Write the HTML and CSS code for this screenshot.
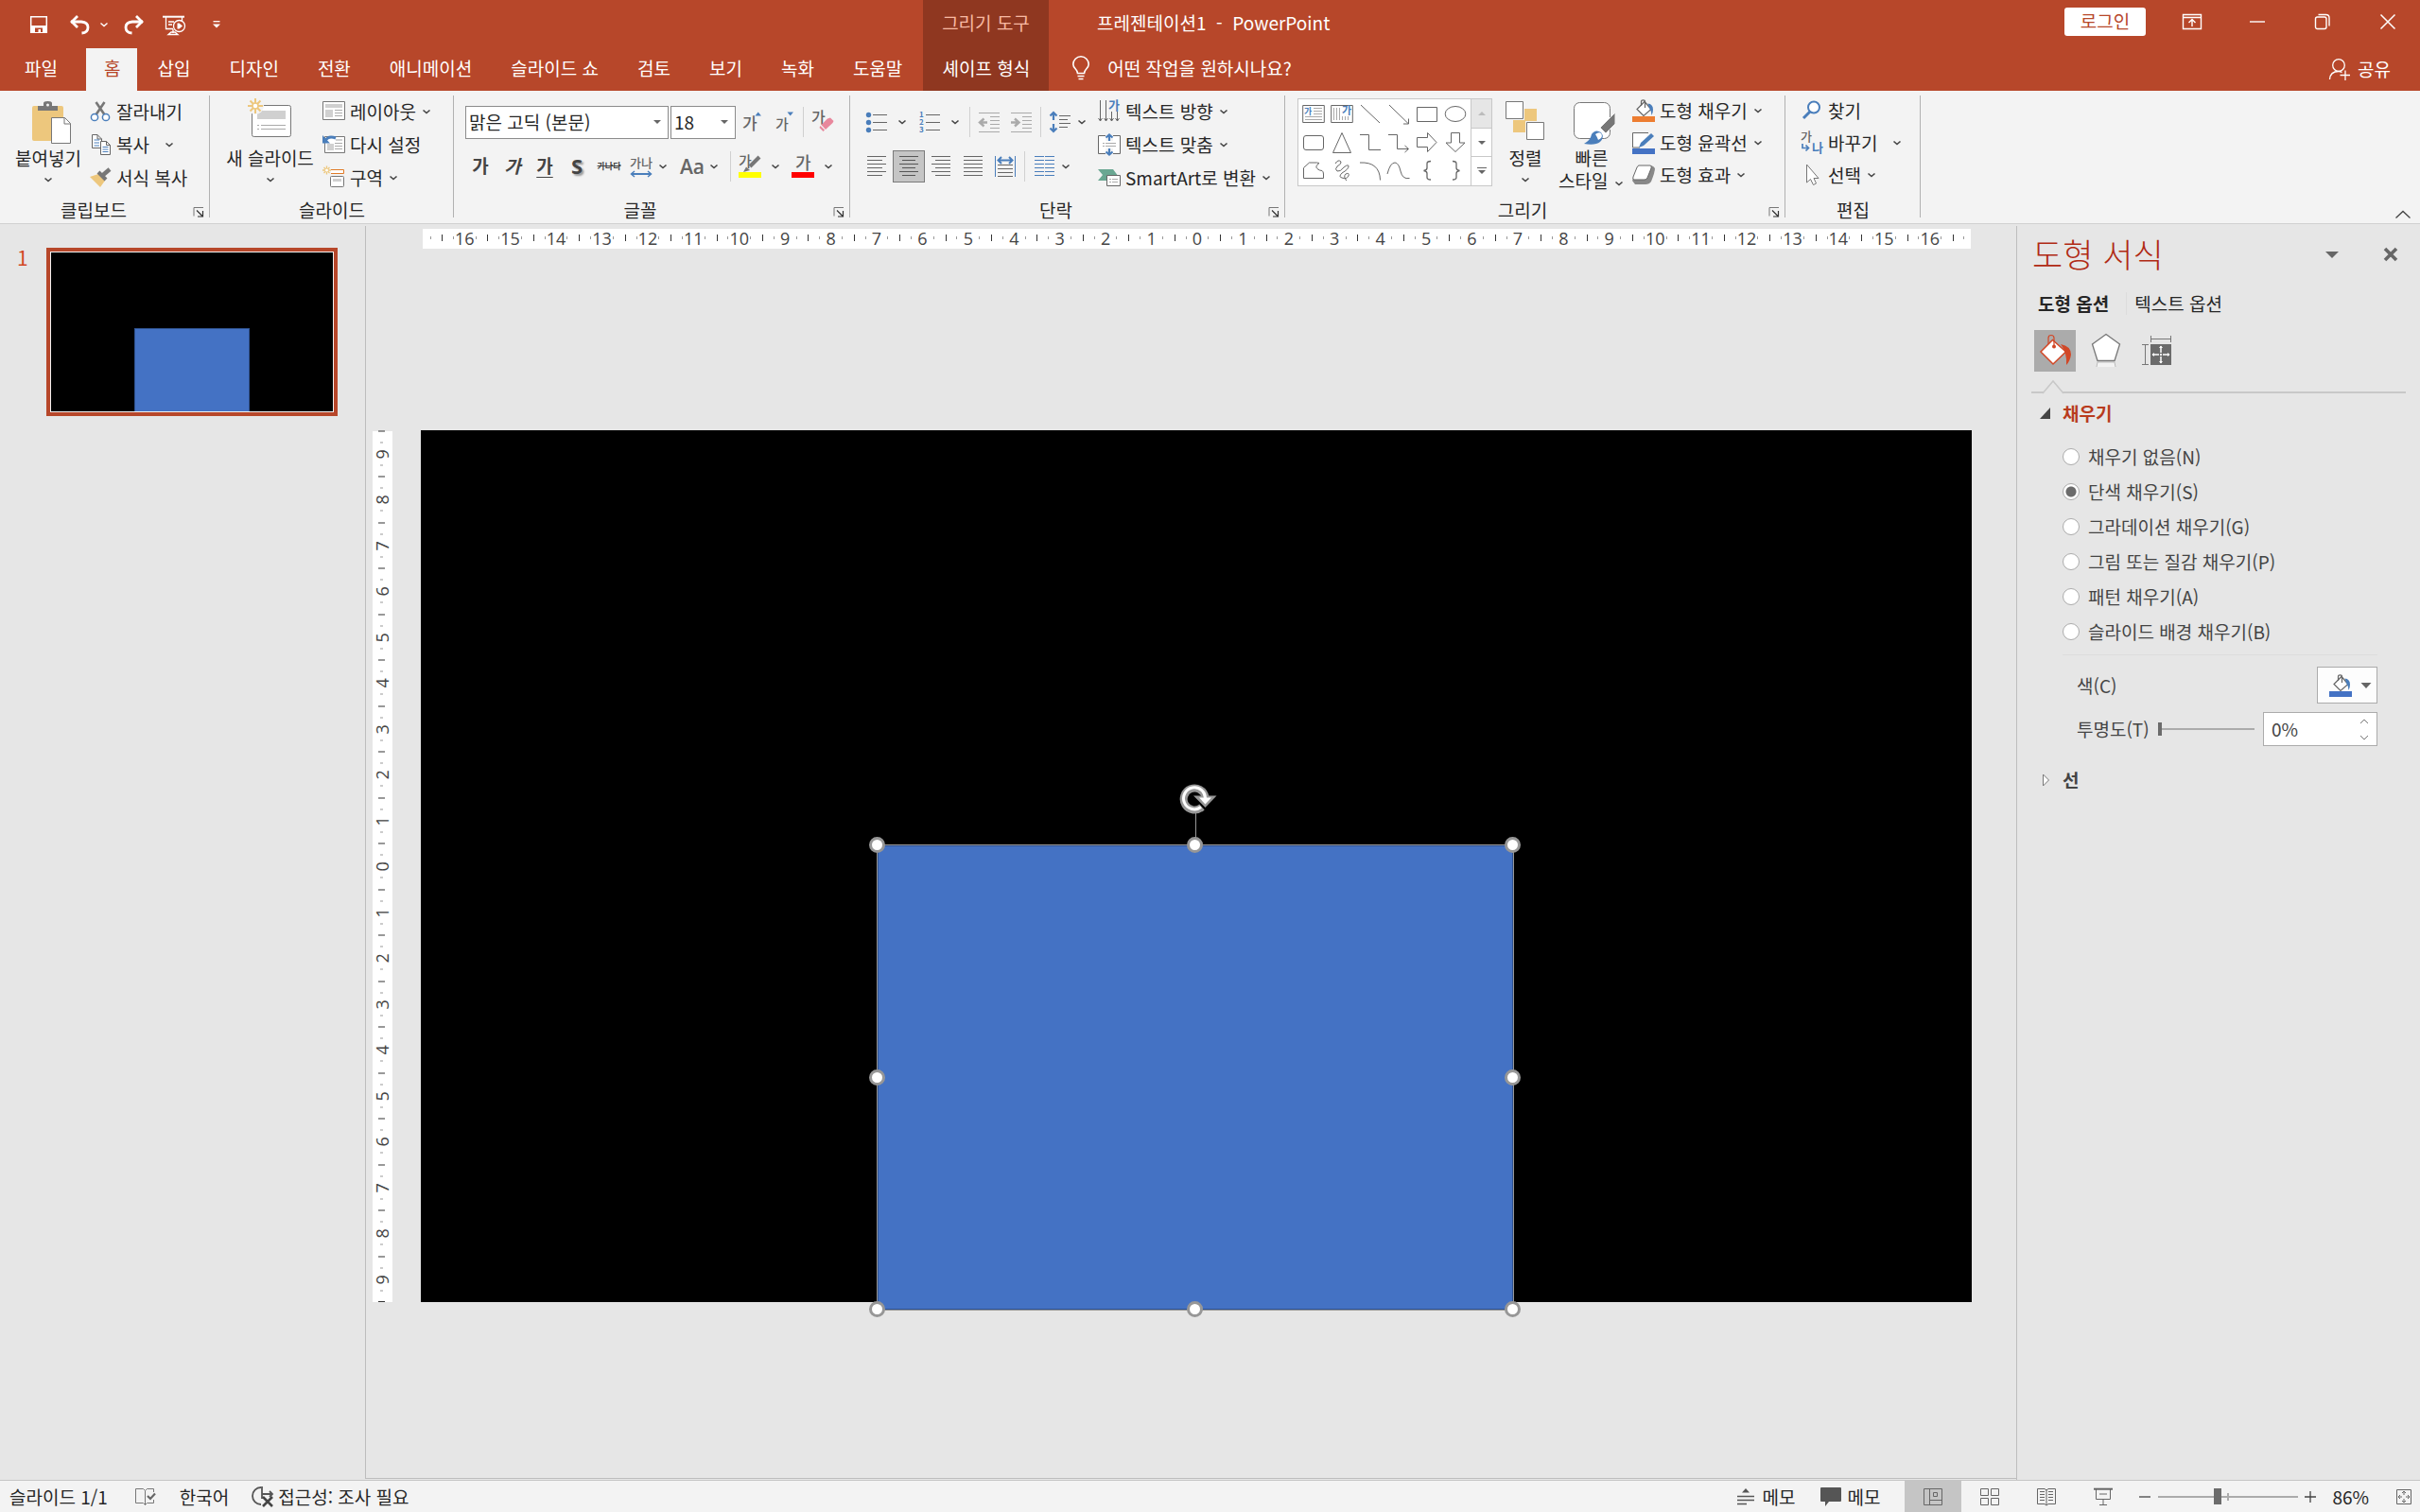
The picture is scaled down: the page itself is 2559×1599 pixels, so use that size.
FILE: index.html
```html
<!DOCTYPE html>
<html lang="ko">
<head>
  <meta charset="UTF-8">
  <meta name="viewport" content="width=device-width, initial-scale=1.0">
  <title>프레젠테이션1 - PowerPoint</title>
  <link rel="stylesheet" href="styles.css">
</head>
<body>
  <svg class="sprite" width="0" height="0">
    <symbol id="chev" viewBox="0 0 12 8"><path d="M2.5 2.5L6 5.5L9.5 2.5" fill="none" stroke="#444" stroke-width="1.6"/></symbol>
    <symbol id="launch" viewBox="0 0 12 12"><path d="M1 10.500V1.500H11" fill="none" stroke="#777"/><path d="M4 4.500L10 10.500M10.500 5V11H5" fill="none" stroke="#333" stroke-width="1.2"/></symbol>
    <symbol id="bucket" viewBox="0 0 24 24">
      <path d="M13 2.500L20 10.500L12 17.500L5 10.500Z" fill="#fff" stroke="#666" stroke-width="1.200"/>
      <path d="M9.500 7V2.500Q9.500 .8 11.500 .8T13.500 2.500V9" fill="none" stroke="#666" stroke-width="1.200"/>
      <path d="M16.500 4.500Q22 5 22 11Q22 14 20.500 17Q20 12 18 9Z" fill="#4a7ebb"/>
    </symbol>
  </svg>

  <header class="titlebar">
    <div class="quick">
      <button class="icon-btn" aria-label="저장"><svg width="24" height="24" viewBox="0 0 24 24"><path d="M3.700 3.700H20.300V20.300H3.700Z" fill="none" stroke="#fff" stroke-width="1.500"/><path d="M3 13H21V21H3Z" fill="#fff"/><path d="M8 15.500H16V20H14V17H11.500V20H8Z" fill="#b7472a"/></svg></button>
      <button class="icon-btn" aria-label="실행 취소"><svg width="24" height="24" viewBox="0 0 24 24"><path d="M3 9H14Q21 9.500 21 15Q21 20.500 14.500 21" fill="none" stroke="#fff" stroke-width="2.800"/><path d="M10 3L4 9L10 15" fill="none" stroke="#fff" stroke-width="2.800"/></svg></button>
      <button class="caret" aria-label="실행 취소 목록"><svg width="12" height="8" viewBox="0 0 12 8"><path d="M2.500 2.500L6 5.500L9.500 2.500" fill="none" stroke="#fff" stroke-width="1.400"/></svg></button>
      <button class="icon-btn redo" aria-label="다시 실행"><svg width="24" height="24" viewBox="0 0 24 24"><path d="M21 9H10Q3 9.500 3 15Q3 20.500 9.500 21" fill="none" stroke="#fff" stroke-width="2.800"/><path d="M14 3L20 9L14 15" fill="none" stroke="#fff" stroke-width="2.800"/></svg></button>
      <button class="icon-btn show" aria-label="처음부터 시작"><svg width="26" height="24" viewBox="0 0 26 24"><path d="M1 3.700H24" stroke="#fff" stroke-width="2"/><path d="M4.500 4V16.500H12M21.500 4V8M12 17V21M7 22.500H17L14 20H10ZM7 9H13M7 12H11" fill="none" stroke="#fff" stroke-width="1.300"/><circle cx="18.500" cy="13.500" r="6" fill="#b7472a" stroke="#fff" stroke-width="1.300"/><path d="M16.500 10.500H18.500L22 13.500L18.500 16.500H16.500Z" fill="#fff"/></svg></button>
      <button class="icon-btn more" aria-label="빠른 실행 도구 모음 사용자 지정"><svg width="12" height="12" viewBox="0 0 12 12"><path d="M2.500 2.700H9.500" stroke="#fff" stroke-width="1.300"/><path d="M2 5.500H10L6 9.500Z" fill="#fff"/></svg></button>
    </div>
    <div class="context-title">그리기 도구</div>
    <div class="doc-title">프레젠테이션1&nbsp; -&nbsp; PowerPoint</div>
    <button class="login">로그인</button>
    <div class="window-controls">
      <button aria-label="리본 메뉴 표시 옵션"><svg width="22" height="18" viewBox="0 0 22 18"><path d="M1.500 1.500H20.500V16.500H1.500ZM1.500 4.500H20.500" fill="none" stroke="#fff" stroke-width="1.400"/><path d="M11 14V7M7.500 10L11 6.500L14.500 10" fill="none" stroke="#fff" stroke-width="1.400"/></svg></button>
      <button aria-label="최소화"><svg width="18" height="18" viewBox="0 0 18 18"><path d="M1 9H17" stroke="#fff" stroke-width="1.400"/></svg></button>
      <button aria-label="이전 크기로"><svg width="18" height="18" viewBox="0 0 18 18"><rect x="1.500" y="4" width="11.500" height="12.500" rx="2" fill="none" stroke="#fff" stroke-width="1.400"/><path d="M4.500 1.500H12.500Q16 1.500 16 5V13.500" fill="none" stroke="#fff" stroke-width="1.400"/></svg></button>
      <button aria-label="닫기"><svg width="18" height="18" viewBox="0 0 18 18"><path d="M1.500 1.500L16.500 16.500M16.500 1.500L1.500 16.500" stroke="#fff" stroke-width="1.500"/></svg></button>
    </div>
  </header>

  <nav class="tabs">
    <a class="tab file" href="#file">파일</a>
    <a class="tab active" href="#home">홈</a>
    <a class="tab" href="#insert">삽입</a>
    <a class="tab" href="#design">디자인</a>
    <a class="tab" href="#transition">전환</a>
    <a class="tab" href="#animation">애니메이션</a>
    <a class="tab" href="#show">슬라이드 쇼</a>
    <a class="tab" href="#review">검토</a>
    <a class="tab" href="#view">보기</a>
    <a class="tab" href="#record">녹화</a>
    <a class="tab" href="#help">도움말</a>
    <a class="tab context" href="#format">셰이프 형식</a>
    <button class="tell-me"><svg width="20" height="26" viewBox="0 0 20 26"><path d="M6.500 18.500C6.500 14 1.800 13.500 1.800 9A8.200 8.200 0 0 1 18.200 9C18.200 13.500 13.500 14 13.500 18.500ZM6.500 21.500H13.500M7.500 24.500H12.500" fill="none" stroke="#fff" stroke-width="1.600"/></svg>어떤 작업을 원하시나요?</button>
    <button class="share"><svg width="24" height="24" viewBox="0 0 24 24"><circle cx="11" cy="8" r="6.300" fill="none" stroke="#fff" stroke-width="1.300"/><path d="M1.500 23Q2 14.500 11 14.500Q13 14.500 14.500 15.500M18 13.500V24M12.500 18.500H23" fill="none" stroke="#fff" stroke-width="1.300"/></svg>공유</button>
  </nav>

  <section class="ribbon">
    <div class="group clipboard">
      <div class="group-body">
        <button class="big paste">
          <svg width="48" height="48" viewBox="-3 0 48 48"><rect x="4" y="8" width="33" height="37" rx="2" fill="#edc77d"/><path d="M10 8H16V5Q16 3 20.500 3T25 5V8H31V13H10Z" fill="#777"/><circle cx="20.500" cy="7" r="1.500" fill="#f3f3f3"/><path d="M24.500 20.500H38.500L44.500 26.500V47.500H24.500Z" fill="#fff" stroke="#777"/><path d="M38 20.500V27H44.500" fill="none" stroke="#777"/></svg>
          <span>붙여넣기</span>
          <svg class="chev" width="12" height="8"><use href="#chev"/></svg>
        </button>
        <div class="rows">
          <button class="row"><svg width="24" height="24" viewBox="0 0 24 24"><path d="M7.500 2L17 16M16.500 2L7 16" stroke="#777" stroke-width="2.600"/><circle cx="6" cy="18" r="3.600" fill="#fff" stroke="#4a7ebb" stroke-width="1.500"/><circle cx="18" cy="18" r="3.600" fill="#fff" stroke="#4a7ebb" stroke-width="1.500"/></svg>잘라내기</button>
          <button class="row split"><svg width="24" height="24" viewBox="0 0 24 24"><path d="M3.500 1.500H9L13.500 6V15.500H3.500ZM9 1.500V6H13.500" fill="#fff" stroke="#666"/><path d="M5.500 7H11M5.500 10H11M5.500 13H11" stroke="#4a7ebb"/><path d="M12.500 8.500H18.500L22.500 12.500V22.500H12.500ZM18.500 8.500V12.500H22.500" fill="#fff" stroke="#666"/><path d="M14.500 14.500H20.500M14.500 17H20.500M14.500 19.500H20.500" stroke="#4a7ebb"/></svg>복사<svg class="chev" width="12" height="8"><use href="#chev"/></svg></button>
          <button class="row"><svg width="24" height="24" viewBox="0 0 24 24"><path d="M1 11L10 8L17 15L12 22Z" fill="#edc77d"/><path d="M10 6L18 14" stroke="#777" stroke-width="4"/><path d="M15 9L22 3" stroke="#777" stroke-width="4.500"/></svg>서식 복사</button>
        </div>
      </div>
      <div class="group-label"><span>클립보드</span><button class="launcher" aria-label="클립보드 옵션"><svg width="12" height="12"><use href="#launch"/></svg></button></div>
    </div>

    <div class="group slides">
      <div class="group-body">
        <button class="big new-slide">
          <svg width="48" height="48" viewBox="1 0 48 48"><rect x="5.500" y="7.500" width="41" height="33" rx="2" fill="#fff" stroke="#777"/><path d="M11 13H41V22H11Z" fill="#d0d0d0"/><path d="M11 28.500H13M15 28.500H41M11 32.500H13M15 32.500H41" stroke="#aaa"/><circle cx="9" cy="8" r="9" fill="#f3f3f3"/><path d="M9 0V16M1 8H17M3.500 2.500L14.500 13.500M14.500 2.500L3.500 13.500" stroke="#edc77d" stroke-width="2"/><circle cx="9" cy="8" r="3" fill="#fff" stroke="#edc77d" stroke-width="1.500"/></svg>
          <span>새 슬라이드</span>
          <svg class="chev" width="12" height="8"><use href="#chev"/></svg>
        </button>
        <div class="rows">
          <button class="row"><svg width="24" height="24" viewBox="0 0 24 24"><path d="M.5 1.500H23.500V20.500H.5Z" fill="#fff" stroke="#777"/><path d="M3 4H21V8H3ZM3 10H11V18H3Z" fill="#d0d0d0"/><path d="M13 10.500H21M13 13.500H21M13 16.500H21" stroke="#aaa"/></svg>레이아웃<svg class="chev" width="12" height="8"><use href="#chev"/></svg></button>
          <button class="row"><svg width="24" height="24" viewBox="0 0 24 24"><path d="M2.500 3.500H23.500V20.500H2.500Z" fill="#fff" stroke="#777"/><path d="M14 6H21V8H14ZM5 11H12V18H5Z" fill="#d0d0d0"/><path d="M13 10.500H21M13 13.500H21M13 16.500H21" stroke="#aaa"/><path d="M3 8Q6 2 14 5" fill="none" stroke="#4a7ebb" stroke-width="3"/><path d="M0 2V10.500H8Z" fill="#4a7ebb"/></svg>다시 설정</button>
          <button class="row"><svg width="24" height="24" viewBox="0 0 24 24"><path d="M9 3.500H22.500V7.500H9" fill="#fff" stroke="#e07b28"/><path d="M4.500 -.5V8.500M0 4H9M1.500 1L7.500 7M7.500 1L1.500 7" stroke="#edc77d" stroke-width="1.300"/><circle cx="4.500" cy="4" r="1.500" fill="#fff"/><rect x="8.500" y="10.500" width="14" height="11" rx="1" fill="#fff" stroke="#777"/><path d="M11 13H20V16H11Z" fill="#d0d0d0"/></svg>구역<svg class="chev" width="12" height="8"><use href="#chev"/></svg></button>
        </div>
      </div>
      <div class="group-label"><span>슬라이드</span></div>
    </div>

    <div class="group font">
      <div class="group-body">
        <div class="tools">
          <div class="tool-row">
            <span class="combo name"><select aria-label="글꼴"><option>맑은 고딕 (본문)</option></select></span>
            <span class="combo size"><select aria-label="글꼴 크기"><option>18</option></select></span>
            <button class="tool" aria-label="글꼴 크기 크게"><svg width="24" height="28" viewBox="0 0 24 28"><text x="2" y="22" class="glyph g17">가</text><path d="M15.500 7.500L18.700 3.500L22 7.500Z" fill="#4a7ebb"/></svg></button>
            <button class="tool" aria-label="글꼴 크기 작게"><svg width="24" height="28" viewBox="0 0 24 28"><text x="3" y="22" class="glyph g15">가</text><path d="M15.500 3.500L18.700 7.500L22 3.500Z" fill="#4a7ebb"/></svg></button>
            <span class="sep"></span>
            <button class="tool" aria-label="모든 서식 지우기"><svg width="24" height="28" viewBox="0 0 24 28"><text x="0" y="15" class="glyph g16">가</text><path d="M17 10.500L20 9.500L23.500 13L22.500 15L15 22L10.500 17Z" fill="#e8879c"/><path d="M9.500 18L14 22.500L12.500 24L8.500 20Z" fill="#e8879c"/></svg></button>
          </div>
          <div class="tool-row">
            <button class="tool bold">가</button>
            <button class="tool italic">가</button>
            <button class="tool underline">가</button>
            <button class="tool shadow">S</button>
            <button class="tool strike">가나다</button>
            <button class="tool" aria-label="문자 간격"><svg width="24" height="24" viewBox="0 0 24 24"><text x="0" y="13" class="glyph g13">가나</text><path d="M2 20H22" stroke="#4a7ebb" stroke-width="2"/><path d="M5 17L1.500 20L5 23M19 17L22.500 20L19 23" fill="none" stroke="#4a7ebb" stroke-width="1.500"/></svg></button>
            <button class="caret" aria-label="문자 간격 목록"><svg width="12" height="8"><use href="#chev"/></svg></button>
            <button class="tool case">Aa</button>
            <button class="caret" aria-label="대/소문자 목록"><svg width="12" height="8"><use href="#chev"/></svg></button>
            <span class="sep"></span>
            <button class="tool" aria-label="강조 색"><svg width="24" height="28" viewBox="0 0 24 28"><text x="0" y="14" class="glyph g15">가</text><path d="M22 4L12 14" stroke="#777" stroke-width="4"/><path d="M8 14.500L12 18L5 20Z" fill="#777"/><path d="M0 20H24V26H0Z" fill="#ff0"/></svg></button>
            <button class="caret wide" aria-label="강조 색 목록"><svg width="12" height="8"><use href="#chev"/></svg></button>
            <button class="tool" aria-label="글꼴 색"><svg width="24" height="28" viewBox="0 0 24 28"><text x="4" y="17" class="glyph g18">가</text><path d="M0 20H24V26H0Z" fill="#f00"/></svg></button>
            <button class="caret wide" aria-label="글꼴 색 목록"><svg width="12" height="8"><use href="#chev"/></svg></button>
          </div>
        </div>
      </div>
      <div class="group-label"><span>글꼴</span><button class="launcher" aria-label="글꼴 옵션"><svg width="12" height="12"><use href="#launch"/></svg></button></div>
    </div>

    <div class="group paragraph">
      <div class="group-body">
        <div class="tools">
          <div class="tool-row">
            <button class="tool" aria-label="글머리 기호"><svg width="24" height="24" viewBox="0 0 24 24"><path d="M8 4.500H23M8 12.500H23M8 20.500H23" stroke="#666"/><circle cx="3.500" cy="4.500" r="2.700" fill="#4a7ebb"/><circle cx="3.500" cy="12.500" r="2.700" fill="#4a7ebb"/><circle cx="3.500" cy="20.500" r="2.700" fill="#4a7ebb"/></svg></button>
            <button class="caret wide" aria-label="글머리 기호 목록"><svg width="12" height="8"><use href="#chev"/></svg></button>
            <button class="tool" aria-label="번호 매기기"><svg width="24" height="24" viewBox="0 0 24 24"><path d="M8 4.500H23M8 12.500H23M8 20.500H23" stroke="#666"/><text x="1" y="7" class="num">1</text><text x="1" y="15" class="num">2</text><text x="1" y="23" class="num">3</text></svg></button>
            <button class="caret wide" aria-label="번호 매기기 목록"><svg width="12" height="8"><use href="#chev"/></svg></button>
            <span class="sep"></span>
            <button class="tool" aria-label="목록 수준 줄임"><svg width="24" height="24" viewBox="0 0 24 24"><path d="M1 2.500H23M13 6.500H23M13 10.500H23M13 14.500H23M13 18.500H23M1 22.500H23" stroke="#aaa"/><path d="M10 12.500H3M6.500 8.500L2 12.500L6.500 16.500" fill="none" stroke="#aaa" stroke-width="2.400"/></svg></button>
            <button class="tool" aria-label="목록 수준 늘림"><svg width="24" height="24" viewBox="0 0 24 24"><path d="M1 2.500H23M13 6.500H23M13 10.500H23M13 14.500H23M13 18.500H23M1 22.500H23" stroke="#aaa"/><path d="M1 12.500H8M5 8.500L9.500 12.500L5 16.500" fill="none" stroke="#aaa" stroke-width="2.400"/></svg></button>
            <span class="sep"></span>
            <button class="tool" aria-label="줄 간격"><svg width="24" height="24" viewBox="0 0 24 24"><path d="M11 5.500H23M11 9.500H20M11 13.500H23M11 17.500H20" stroke="#666"/><path d="M5 10V2M1.500 5.500L5 2L8.500 5.500M5 14V22M1.500 18.500L5 22L8.500 18.500" fill="none" stroke="#4a7ebb" stroke-width="2.200"/></svg></button>
            <button class="caret" aria-label="줄 간격 목록"><svg width="12" height="8"><use href="#chev"/></svg></button>
          </div>
          <div class="tool-row">
            <button class="tool" aria-label="왼쪽 맞춤"><svg width="24" height="24" viewBox="0 0 24 24"><path d="M2 1.500H22M2 5.500H18M2 9.500H22M2 13.500H18M2 17.500H22M2 21.500H18" stroke="#666"/></svg></button>
            <button class="tool pressed" aria-label="가운데 맞춤"><svg width="24" height="24" viewBox="0 0 24 24"><path d="M2 1.500H22M5 5.500H19M2 9.500H22M5 13.500H19M2 17.500H22M5 21.500H19" stroke="#555"/></svg></button>
            <button class="tool" aria-label="오른쪽 맞춤"><svg width="24" height="24" viewBox="0 0 24 24"><path d="M2 1.500H22M6 5.500H22M2 9.500H22M6 13.500H22M2 17.500H22M6 21.500H22" stroke="#666"/></svg></button>
            <button class="tool" aria-label="양쪽 맞춤"><svg width="24" height="24" viewBox="0 0 24 24"><path d="M2 1.500H22M2 5.500H22M2 9.500H22M2 13.500H22M2 17.500H22M2 21.500H22" stroke="#666"/></svg></button>
            <button class="tool" aria-label="균등 분할"><svg width="24" height="24" viewBox="0 0 24 24"><path d="M1.500 1V23M22.500 1V23" stroke="#4a7ebb"/><path d="M4 10.500H20M4 14.500H20M4 18.500H20M4 22.500H20" stroke="#666"/><path d="M5 5.500H19M8 2L4.500 5.500L8 9M16 2L19.500 5.500L16 9" fill="none" stroke="#4a7ebb" stroke-width="2"/></svg></button>
            <span class="sep"></span>
            <button class="tool" aria-label="열 추가 또는 제거"><svg width="24" height="24" viewBox="0 0 24 24"><path d="M2 1.500H12M2 5.500H12M2 9.500H12M2 13.500H12M2 17.500H12M2 21.500H12M13 1.500H23M13 5.500H23M13 9.500H23M13 13.500H23M13 17.500H23M13 21.500H23" stroke="#4a7ebb"/></svg></button>
            <button class="caret" aria-label="열 목록"><svg width="12" height="8"><use href="#chev"/></svg></button>
          </div>
        </div>
        <div class="rows">
          <button class="row"><svg width="24" height="24" viewBox="0 0 24 24"><path d="M2.500 0V22M8.500 0V22M14.500 12V22M20.500 12V22" stroke="#666"/><path d="M.5 19L2.500 22L4.500 19M6.500 19L8.500 22L10.500 19M12.500 19L14.500 22L16.500 19M18.500 19L20.500 22L22.500 19" fill="none" stroke="#666"/><text x="11" y="10" class="glyph blue g12">가</text></svg>텍스트 방향<svg class="chev" width="12" height="8"><use href="#chev"/></svg></button>
          <button class="row"><svg width="24" height="24" viewBox="0 0 24 24"><path d="M.5 2.500H23.500V21.500H.5Z" fill="#fff" stroke="#666"/><path d="M8 0H16V8H8ZM8 16H16V24H8Z" fill="#f3f3f3"/><path d="M5 10.500H7M8 10.500H19M5 13.500H7M8 13.500H19" stroke="#aaa"/><path d="M12 8V1.500M8.500 4.500L12 1.500L15.500 4.500M12 16V22.500M8.500 19.500L12 22.500L15.500 19.500" fill="none" stroke="#4a7ebb" stroke-width="2.200"/></svg>텍스트 맞춤<svg class="chev" width="12" height="8"><use href="#chev"/></svg></button>
          <button class="row"><svg width="24" height="24" viewBox="0 0 24 24"><path d="M0 3H16L20.500 9L16 15H0L5 9Z" fill="#6aa792"/><path d="M9.500 9.500H23.500V20.500H9.500Z" fill="#fff" stroke="#666"/><path d="M12 13.500H14M15 13.500H21M12 16.500H14M15 16.500H21" stroke="#aaa"/></svg>SmartArt로 변환<svg class="chev" width="12" height="8"><use href="#chev"/></svg></button>
        </div>
      </div>
      <div class="group-label"><span>단락</span><button class="launcher" aria-label="단락 옵션"><svg width="12" height="12"><use href="#launch"/></svg></button></div>
    </div>

    <div class="group drawing">
      <div class="group-body">
        <div class="gallery">
          <div class="shapes">
            <button aria-label="텍스트 상자"><svg width="24" height="24" viewBox="0 0 24 24"><path d="M.7 3.500H23.300V21.500H.7Z" fill="#fff" stroke="#666"/><text x="2" y="13" class="glyph blue g9">가</text><path d="M12 6.500H21M12 9.500H21M12 12.500H21M3 15.500H21M3 18.500H21" stroke="#aaa"/></svg></button>
            <button aria-label="세로 텍스트 상자"><svg width="24" height="24" viewBox="0 0 24 24"><path d="M.7 3.500H23.300V21.500H.7Z" fill="#fff" stroke="#666"/><text x="12" y="13" class="glyph blue g10">가</text><path d="M3.500 6V19M6.500 6V19M9.500 6V19M12.500 15V19M15.500 15V19M18.500 15V19" stroke="#aaa"/></svg></button>
            <button aria-label="선"><svg width="24" height="24" viewBox="0 0 24 24"><path d="M2 3L22 22" stroke="#666"/></svg></button>
            <button aria-label="화살표"><svg width="24" height="24" viewBox="0 0 24 24"><path d="M2 3L22 22.500M22.500 17.500V23H17" fill="none" stroke="#666"/></svg></button>
            <button aria-label="직사각형"><svg width="24" height="24" viewBox="0 0 24 24"><path d="M1.500 5.500H22.500V20.500H1.500Z" fill="#fff" stroke="#666"/></svg></button>
            <button aria-label="타원"><svg width="24" height="24" viewBox="0 0 24 24"><ellipse cx="12" cy="12.500" rx="10.800" ry="8" fill="#fff" stroke="#666"/></svg></button>
            <button aria-label="둥근 직사각형"><svg width="24" height="24" viewBox="0 0 24 24"><rect x="1.500" y="5.500" width="21" height="15" rx="2.500" fill="#fff" stroke="#666"/></svg></button>
            <button aria-label="이등변 삼각형"><svg width="24" height="24" viewBox="0 0 24 24"><path d="M12 2.500L21.500 23.500H2.500Z" fill="#fff" stroke="#666"/></svg></button>
            <button aria-label="꺾인 연결선"><svg width="24" height="24" viewBox="0 0 24 24"><path d="M1 4.500H10.500V20.500H23" fill="none" stroke="#666"/></svg></button>
            <button aria-label="꺾인 화살표 연결선"><svg width="24" height="24" viewBox="0 0 24 24"><path d="M1 4.500H10.500V19.500H22M18.500 16L22.500 19.500L18.500 23" fill="none" stroke="#666"/></svg></button>
            <button aria-label="오른쪽 화살표"><svg width="24" height="24" viewBox="0 0 24 24"><path d="M1.500 7.500H12.500V2.500L22 12.500L12.500 22.500V17.500H1.500Z" fill="#fff" stroke="#666"/></svg></button>
            <button aria-label="아래쪽 화살표"><svg width="24" height="24" viewBox="0 0 24 24"><path d="M7.500 2.500H16.500V13H22L12 22.500L2 13H7.500Z" fill="#fff" stroke="#666"/></svg></button>
            <button aria-label="자유형 도형"><svg width="24" height="24" viewBox="0 0 24 24"><path d="M1.500 9.500L7.500 4H15.500L18 4.500Q13 8 16 10.500Q18 12.500 21 12.500Q22.500 13.500 22.500 16V20.500H1.500Z" fill="#fff" stroke="#666"/></svg></button>
            <button aria-label="자유형 자유 곡선"><svg width="24" height="24" viewBox="0 0 24 24"><path d="M5 5Q8 0 11 3Q12 5 7 8Q4 11 7 13Q10 14 14 9Q19 5 19 8Q19 11 12 15Q8 19 12 20Q17 22 19 18Q20 14 16 16Q13 19 17 23" fill="none" stroke="#666"/></svg></button>
            <button aria-label="호"><svg width="24" height="24" viewBox="0 0 24 24"><path d="M1 4Q22 3 22.500 22.500" fill="none" stroke="#666"/></svg></button>
            <button aria-label="곡선"><svg width="24" height="24" viewBox="0 0 24 24"><path d="M0 16Q3 4 8 4Q12 4 14 13Q16 22 23.500 20.500" fill="none" stroke="#666"/></svg></button>
            <button aria-label="왼쪽 중괄호"><svg width="24" height="24" viewBox="0 0 24 24"><path d="M16 2.500Q12 2.500 12 5V9.500Q12 12 8.500 12.500Q12 13 12 15.500V19.500Q12 22 16 22" fill="none" stroke="#666" stroke-width="1.300"/></svg></button>
            <button aria-label="오른쪽 중괄호"><svg width="24" height="24" viewBox="0 0 24 24"><path d="M9 2.500Q13 2.500 13 5V9.500Q13 12 16.500 12.500Q13 13 13 15.500V19.500Q13 22 9 22" fill="none" stroke="#666" stroke-width="1.300"/></svg></button>
          </div>
          <div class="gallery-scroll">
            <button class="off" aria-label="위로"><svg width="10" height="8" viewBox="0 0 10 8"><path d="M1 6L5 2L9 6Z" fill="#bbb"/></svg></button>
            <button aria-label="아래로"><svg width="10" height="8" viewBox="0 0 10 8"><path d="M1 2L5 6L9 2Z" fill="#666"/></svg></button>
            <button aria-label="자세히"><svg width="10" height="10" viewBox="0 0 10 10"><path d="M0 1.500H10" stroke="#666"/><path d="M1 4L5 8L9 4Z" fill="#666"/></svg></button>
          </div>
        </div>
        <button class="big arrange">
          <svg width="42" height="48" viewBox="0 0 42 48"><path d="M20 11H33V24H20ZM8 23H21V36H8Z" fill="#edc77d"/><path d="M.5 3.500H18.500V21.500H.5ZM22.500 25.500H40.500V43.500H22.500Z" fill="#fff" stroke="#777"/></svg>
          <span>정렬</span>
          <svg class="chev" width="12" height="8"><use href="#chev"/></svg>
        </button>
        <button class="big quick-style">
          <svg width="48" height="48" viewBox="-1 0 48 48"><rect x="4.500" y="4.500" width="38" height="38" rx="6" fill="#fff" stroke="#777"/><path d="M48 15V27L38 37L32 31Z" fill="#777" stroke="#f3f3f3"/><path d="M15 48Q22 44 23 38Q27 32 33 36Q37 41 32 46Q27 50 15 48Z" fill="#4a7ebb"/><path d="M27 38Q31 35 33.500 37.500Q35 42 30 44Q29 41 27 38Z" fill="#fff"/></svg>
          <span>빠른<br>스타일 <svg class="chev" width="12" height="8"><use href="#chev"/></svg></span>
        </button>
        <div class="rows tight">
          <button class="row"><svg width="24" height="24" viewBox="0 0 24 24"><use href="#bucket"/><path d="M0 18H24V24H0Z" fill="#ed7d31"/></svg>도형 채우기<svg class="chev" width="12" height="8"><use href="#chev"/></svg></button>
          <button class="row"><svg width="24" height="24" viewBox="0 0 24 24"><path d="M17 1.500H.5V17H8" fill="#fff" stroke="#666"/><path d="M20 2L23 5L12 15L7 17L9 12Z" fill="#4a7ebb"/><path d="M0 18H24V24H0Z" fill="#4472c4"/></svg>도형 윤곽선<svg class="chev" width="12" height="8"><use href="#chev"/></svg></button>
          <button class="row"><svg width="24" height="24" viewBox="0 0 24 24"><path d="M7 2H20Q23 3 24 5Q24 9 20 19Q18 22 14 22H3L0 18Z" fill="#888"/><path d="M7 2H19Q21 2 20 5L16 15Q15 17 13 17H2Q0 17 1 14L5 4Q6 2 7 2Z" fill="#fff" stroke="#666"/></svg>도형 효과<svg class="chev" width="12" height="8"><use href="#chev"/></svg></button>
        </div>
      </div>
      <div class="group-label"><span>그리기</span><button class="launcher" aria-label="그리기 옵션"><svg width="12" height="12"><use href="#launch"/></svg></button></div>
    </div>

    <div class="group editing">
      <div class="group-body">
        <div class="rows tight">
          <button class="row"><svg width="24" height="24" viewBox="0 0 24 24"><circle cx="14" cy="8.500" r="6" fill="#fff" stroke="#4a7ebb" stroke-width="2"/><path d="M10 13L3 20" stroke="#4a7ebb" stroke-width="3"/></svg>찾기</button>
          <button class="row split"><svg width="24" height="24" viewBox="0 0 24 24"><text x="0" y="10" class="glyph g12">가</text><text x="12" y="22" class="glyph blue g12">나</text><path d="M2 13V17.500H8M5.500 14.500L8.500 17.500L5.500 20.500" fill="none" stroke="#4a7ebb" stroke-width="1.700"/></svg>바꾸기<svg class="chev" width="12" height="8"><use href="#chev"/></svg></button>
          <button class="row"><svg width="24" height="24" viewBox="0 0 24 24"><path d="M6.500 1V20L10.500 16.500L13.500 22.500L16.500 21L14 15.500H19Z" fill="#fff" stroke="#777"/></svg>선택<svg class="chev" width="12" height="8"><use href="#chev"/></svg></button>
        </div>
      </div>
      <div class="group-label"><span>편집</span></div>
    </div>
    <button class="collapse" aria-label="리본 메뉴 축소"><svg width="18" height="10" viewBox="0 0 18 10"><path d="M1.500 8.500L9 1.500L16.500 8.500" fill="none" stroke="#444" stroke-width="1.300"/></svg></button>
  </section>

  <main class="workspace">
    <aside class="thumbs">
      <span class="thumb-number">1</span>
      <a class="thumb" href="#slide1" aria-label="슬라이드 1"><span class="thumb-slide"><span class="thumb-shape"></span></span></a>
    </aside>

    <section class="editor">
      <div class="ruler horizontal" id="ruler-h"></div>
      <div class="stage">
        <div class="ruler vertical" id="ruler-v"></div>
        <div class="slide" id="slide1">
          <div class="shape">
            <span class="stem"></span>
            <svg class="rotate" width="40" height="32" viewBox="0 0 40 32"><path d="M24 25.500A11.500 11.500 0 1 1 27.500 15" fill="none" stroke="#979797" stroke-width="8"/><path d="M15 13.500H39.500L27.500 26Z" fill="#979797"/><path d="M23 25.500A11.500 11.500 0 1 1 27.500 17" fill="none" stroke="#fff" stroke-width="3"/><path d="M21 15.500H34L27.500 22.500Z" fill="#fff"/></svg>
            <i class="handle nw"></i><i class="handle n"></i><i class="handle ne"></i>
            <i class="handle w"></i><i class="handle e"></i>
            <i class="handle sw"></i><i class="handle s"></i><i class="handle se"></i>
          </div>
        </div>
      </div>
    </section>

    <aside class="format">
      <div class="format-head">
        <h2>도형 서식</h2>
        <button aria-label="작업 창 옵션"><svg width="14" height="8" viewBox="0 0 14 8"><path d="M0 1H14L7 8Z" fill="#666"/></svg></button>
        <button aria-label="닫기"><svg width="16" height="16" viewBox="0 0 16 16"><path d="M2 2L14 14M14 2L2 14" stroke="#666" stroke-width="3.600"/></svg></button>
      </div>
      <div class="format-tabs">
        <a class="selected" href="#shape-options">도형 옵션</a>
        <a href="#text-options">텍스트 옵션</a>
      </div>
      <div class="format-icons">
        <button class="selected" aria-label="채우기 및 선"><svg width="36" height="36" viewBox="0 0 36 36"><path d="M15.500 6.500L29.500 19L16 32L3 19Z" fill="#fff" stroke="#d24726" stroke-width="1.500"/><path d="M11 11V4.500Q11 1.500 14 1.500T17 4.500V13" fill="none" stroke="#d24726" stroke-width="1.200"/><circle cx="17" cy="13.500" r="2" fill="#d24726"/><path d="M24 11Q35 13 35 22Q34 29 30 33Q31 20 24 11Z" fill="#d24726"/></svg></button>
        <button aria-label="효과"><svg width="36" height="38" viewBox="0 0 36 38"><path d="M18 1.500L32.500 12L27 29.500H9L3.500 12Z" fill="#fff" stroke="#777" stroke-width="1.300"/><path d="M8 36L9 31H27L28 36" fill="#f3f3f3" stroke="#bbb"/></svg></button>
        <button aria-label="크기 및 속성"><svg width="36" height="36" viewBox="0 0 36 36"><path d="M11.500 2V9M32.500 2V9M11.500 5.500H32.500M2 11.500H9M2 32.500H9M5.500 11.500V32.500" stroke="#777" fill="none"/><path d="M11 11H33V33H11Z" fill="#6b6b6b"/><path d="M22 13V20M22 24V31M13 22H20M24 22H31" stroke="#fff" stroke-width="1.500"/><path d="M20 15L22 12.500L24 15ZM20 29L22 31.500L24 29ZM15 20L12.500 22L15 24ZM29 20L31.500 22L29 24Z" fill="#fff"/><path d="M21 21H23V23H21Z" fill="#fff"/></svg></button>
      </div>
      <div class="notch"><svg width="22" height="15" viewBox="0 0 22 15"><path d="M0 14L11 1L22 14" fill="#e6e6e6" stroke="#c8c8c8" stroke-width="1.500"/></svg></div>

      <h3 class="section-title open"><svg width="12" height="14" viewBox="0 0 12 14"><path d="M11 1V13H0Z" fill="#444"/></svg>채우기</h3>
      <div class="fill-options">
        <label><input type="radio" name="fill">채우기 없음(N)</label>
        <label><input type="radio" name="fill" checked>단색 채우기(S)</label>
        <label><input type="radio" name="fill">그라데이션 채우기(G)</label>
        <label><input type="radio" name="fill">그림 또는 질감 채우기(P)</label>
        <label><input type="radio" name="fill">패턴 채우기(A)</label>
        <label><input type="radio" name="fill">슬라이드 배경 채우기(B)</label>
      </div>
      <div class="field">
        <label for="fill-color">색(C)</label>
        <button class="color-btn" id="fill-color"><svg width="24" height="24" viewBox="0 0 24 24"><use href="#bucket"/><path d="M0 18H24V24H0Z" fill="#4472c4"/></svg><svg width="12" height="6" viewBox="0 0 12 6"><path d="M.5 0H11.500L6 6Z" fill="#666"/></svg></button>
      </div>
      <div class="field">
        <label for="opacity">투명도(T)</label>
        <input class="slider" id="opacity" type="range" min="0" max="100" value="0">
        <span class="spin">
          <input type="text" value="0%" aria-label="투명도 값">
          <span class="spin-buttons">
            <button aria-label="늘림"><svg width="10" height="6" viewBox="0 0 10 6"><path d="M1 5L5 1L9 5" fill="none" stroke="#777"/></svg></button>
            <button aria-label="줄임"><svg width="10" height="6" viewBox="0 0 10 6"><path d="M1 1L5 5L9 1" fill="none" stroke="#777"/></svg></button>
          </span>
        </span>
      </div>
      <h3 class="section-title"><svg width="12" height="14" viewBox="0 0 12 14"><path d="M3.500 1V13L9.500 7Z" fill="#fff" stroke="#777"/></svg>선</h3>
    </aside>
  </main>

  <footer class="status">
    <button class="slide-count">슬라이드 1/1</button>
    <button class="proof" aria-label="맞춤법 검사"><svg width="22" height="20" viewBox="0 0 22 20"><path d="M10.500 18.500L8.500 16.500H.5V1.500H8.500L10.500 3.500L12.500 1.500H19.500V5M10.500 3.500V18.500L12.500 16.500H19.500V13" fill="none" stroke="#777"/><path d="M13 9L16 12L21 6.500" fill="none" stroke="#666" stroke-width="2.200"/></svg></button>
    <button class="lang">한국어</button>
    <button class="access"><svg width="22" height="24" viewBox="0 0 22 24"><path d="M8 2A9 9 0 0 0 8 20" fill="none" stroke="#555" stroke-width="1.800"/><path d="M9 1V9M9 9H20M17 6L20 9L17 12M9 9L9 14" fill="none" stroke="#555" stroke-width="1.800"/><path d="M10 12L20 22M20 12L10 22" stroke="#444" stroke-width="2.600"/></svg>접근성: 조사 필요</button>
    <button class="notes"><svg width="20" height="20" viewBox="0 0 20 20"><path d="M10 1L14 5.500H6Z" fill="#555"/><path d="M1 9.500H19M1 13.500H19M1 17.500H11" stroke="#555" stroke-width="1.300"/></svg>메모</button>
    <button class="comments"><svg width="24" height="22" viewBox="0 0 24 22"><path d="M2 1H22Q23 1 23 2V15Q23 16 22 16H10L6 21V16H2Q1 16 1 15V2Q1 1 2 1Z" fill="#555"/></svg>메모</button>
    <div class="views">
      <button class="selected" aria-label="기본"><svg width="20" height="20" viewBox="0 0 20 20"><path d="M.5 1.500H19.500V18.500H.5ZM6.500 1.500V18.500M6.500 13.500H19.500M10.500 5.500H14.500V9.500H10.500Z" fill="none" stroke="#666"/></svg></button>
      <button aria-label="여러 슬라이드"><svg width="20" height="20" viewBox="0 0 20 20"><path d="M.5 1.500H8.500V8.500H.5ZM11.500 1.500H19.500V8.500H11.500ZM.5 11.500H8.500V18.500H.5ZM11.500 11.500H19.500V18.500H11.500Z" fill="none" stroke="#666"/></svg></button>
      <button aria-label="읽기용 보기"><svg width="20" height="20" viewBox="0 0 20 20"><path d="M.5 1.500H8L10 3L12 1.500H19.500V17.500H12L10 19L8 17.500H.5ZM10 2V19" fill="none" stroke="#666"/><path d="M3 4.500H8M3 7.500H8M3 10.500H8M3 13.500H8M12 4.500H17M12 7.500H17M12 10.500H17M12 13.500H17" stroke="#666"/></svg></button>
      <button aria-label="슬라이드 쇼"><svg width="20" height="20" viewBox="0 0 20 20"><path d="M0 1.700H20" stroke="#666" stroke-width="2"/><path d="M2.500 2V12.500H17.500V2M10 13V18.500M6 18.500H14M6 7H14" fill="none" stroke="#666"/></svg></button>
    </div>
    <button class="zoom-step" aria-label="축소"><svg width="12" height="12" viewBox="0 0 12 12"><path d="M0 6H12" stroke="#444" stroke-width="1.300"/></svg></button>
    <input class="slider zoom" type="range" min="0" max="100" value="42" aria-label="확대/축소">
    <button class="zoom-step" aria-label="확대"><svg width="12" height="12" viewBox="0 0 12 12"><path d="M0 6H12M6 0V12" stroke="#444" stroke-width="1.300"/></svg></button>
    <button class="zoom-value">86%</button>
    <button class="fit" aria-label="현재 창 크기에 맞춤"><svg width="16" height="18" viewBox="0 0 16 18"><path d="M.5 1.500H15.500V16.500H.5Z" fill="none" stroke="#666"/><path d="M8 3V7M8 11V15M2 9H6M10 9H14" stroke="#666"/><path d="M6 5L8 3L10 5M6 13L8 15L10 13M4 7L2 9L4 11M12 7L14 9L12 11" fill="none" stroke="#666"/></svg></button>
  </footer>

  <script>
    // numbers count down to 0 in the middle and back up again
    function buildRuler(id, max) {
      const ruler = document.getElementById(id);
      for (let i = -max; i <= max; i++) {
        const cell = document.createElement('span');
        cell.className = 'unit';
        cell.textContent = Math.abs(i);
        ruler.appendChild(cell);
      }
    }

    buildRuler('ruler-h', 16);
    buildRuler('ruler-v', 9);
  </script>
</body>
</html>
```
FILE: styles.css
```css
* {
  box-sizing: border-box;
}

body {
  margin: 0;
  height: 100vh;
  display: flex;
  flex-direction: column;
  font-family: "Noto Sans CJK KR", "Noto Sans", sans-serif;
  font-size: 19px;
  line-height: 24px;
  color: #262626;
  background: #e6e6e6;
  overflow: hidden;
}

button, input, select {
  font: inherit;
  color: inherit;
  margin: 0;
  padding: 0;
  border: 0;
  background: none;
  white-space: nowrap;
}

button {
  display: flex;
  align-items: center;
  justify-content: center;
}

a {
  color: inherit;
  text-decoration: none;
}

svg {
  display: block;
  flex: none;
  overflow: visible;
}

.sprite {
  position: absolute;
}

.glyph {
  fill: #666;
  font-weight: 500;
}

.glyph.blue {
  fill: #4a7ebb;
  font-weight: bold;
}

.g9 { font-size: 9px; }
.g10 { font-size: 11px; }
.g12 { font-size: 13px; }
.g13 { font-size: 13px; }
.g15 { font-size: 15px; }
.g16 { font-size: 16px; }
.g17 { font-size: 17px; }
.g18 { font-size: 18px; }

.num {
  font-size: 8px;
  font-weight: bold;
  fill: #4a7ebb;
}

/* title bar */
.titlebar {
  display: flex;
  height: 51px;
  background: #b7472a;
  color: #fff;
}

.quick {
  display: flex;
  align-items: center;
  width: 976px;
  padding-left: 29px;
}

.quick .icon-btn {
  margin-right: 19px;
}

.quick .icon-btn + .caret {
  margin-left: -11px;
  margin-right: 14px;
}

.quick .redo {
  margin-right: 17px;
}

.quick .show {
  margin-right: 26px;
}

.context-title {
  width: 133px;
  padding-top: 12px;
  text-align: center;
  color: #f8b9a2;
  background: #8f3720;
}

.doc-title {
  flex: 1;
  padding: 12px 0 0 51px;
}

.login {
  width: 86px;
  height: 30px;
  margin: 8px 26px 0 0;
  padding-bottom: 2px;
  border-radius: 3px;
  background: #fff;
  color: #b7472a;
}

.window-controls {
  display: flex;
  height: 46px;
}

.window-controls button {
  width: 69px;
}

.window-controls button:first-child {
  width: 46px;
  margin-right: 11px;
}

/* ribbon tabs */
.tabs {
  display: flex;
  height: 45px;
  padding-left: 6px;
  background: #b7472a;
  color: #fff;
}

.tab {
  padding: 9px 20px 0 21px;
}

.tab.file {
  padding-left: 20px;
  margin-right: 10px;
}

.tab.active {
  padding: 9px 18px 0 19px;
  background: #f3f3f3;
  color: #b7472a;
}

.tab.context {
  width: 133px;
  margin-left: 2px;
  padding: 9px 0 0;
  text-align: center;
  background: #8f3720;
}

.tell-me {
  margin-left: 24px;
  padding-bottom: 3px;
  gap: 18px;
}

.share {
  margin-left: auto;
  margin-right: 31px;
  padding-bottom: 2px;
  gap: 7px;
}

/* ribbon */
.ribbon {
  display: flex;
  height: 141px;
  background: #f3f3f3;
  border-bottom: 1px solid #d0d0d0;
}

.group {
  display: flex;
  flex-direction: column;
  justify-content: space-between;
  padding: 5px 0 2px;
  background: linear-gradient(#b1b1b1, #b1b1b1) right 5px / 1px 129px no-repeat;
}

.group-body {
  display: flex;
}

.clipboard { width: 222px; padding-left: 16px; }
.slides { width: 258px; padding-left: 16px; }
.font { width: 419px; padding-left: 11px; }
.paragraph { width: 460px; padding-left: 11px; }
.drawing { width: 529px; padding-left: 13px; }
.editing { width: 143px; padding-left: 16px; }

.group-label {
  display: flex;
  margin-left: -12px;
}

.clipboard .group-label,
.slides .group-label,
.drawing .group-label,
.editing .group-label {
  margin-left: -16px;
}

.group-label span {
  flex: 1;
  text-align: center;
}

.launcher {
  width: 24px;
  padding: 3px 0 0;
}

.big {
  flex-direction: column;
  justify-content: flex-start;
  margin-top: 3px;
}

.big span {
  margin: 3px 0 7px;
  text-align: center;
}

.paste {
  width: 70px;
}

.new-slide {
  width: 95px;
}

.arrange {
  width: 42px;
  margin: 3px 14px 0;
}

.quick-style {
  width: 70px;
}

.quick-style .chev {
  display: inline-block;
  vertical-align: middle;
}

.rows {
  margin-left: 8px;
}

.row {
  height: 35px;
  padding-bottom: 2px;
  gap: 5px;
}

.tight .row {
  height: 34px;
}

.row.split .chev {
  margin-left: 10px;
}

.tools {
  display: flex;
  flex-direction: column;
  gap: 13px;
  padding-top: 11px;
}

.paragraph .rows {
  margin-left: 3px;
}

.editing .rows {
  margin-left: 0;
}

.tool-row {
  display: flex;
  align-items: center;
  height: 34px;
}

.tool {
  width: 34px;
  height: 34px;
  padding-bottom: 1px;
  color: #444;
}

.pressed {
  background: #c5c5c5;
  border: 1px solid #7a7a7a;
}

.bold,
.italic,
.underline {
  padding-bottom: 3px;
  font-weight: bold;
}

.italic {
  font-style: italic;
}

.underline {
  text-decoration: underline;
  text-decoration-thickness: 1px;
  text-underline-offset: 4px;
}

.shadow {
  padding-bottom: 3px;
  font-family: "Open Sans", "Noto Sans", sans-serif;
  font-size: 22px;
  font-weight: bold;
  text-shadow: 2px 2px 2px #999;
}

.strike {
  font-size: 9px;
  font-weight: bold;
  text-decoration: line-through;
}

.case {
  font-family: "Open Sans", "Noto Sans", sans-serif;
  font-size: 21px;
  font-weight: 600;
  color: #666;
}

.caret {
  width: 12px;
  height: 34px;
}

.tool-row .caret {
  margin-right: 8px;
}

.tool-row .caret.wide {
  margin: 0 6px 0 4px;
}

.sep {
  width: 1px;
  height: 32px;
  margin: 0 3px;
  background: #d0d0d0;
}

.combo {
  position: relative;
  height: 35px;
  margin-left: 1px;
  background: #fff;
  border: 1px solid #8c8c8c;
}

.combo.name { width: 215px; }

.combo.size {
  width: 69px;
  margin-left: 2px;
}

.combo select {
  width: 100%;
  height: 100%;
  padding-left: 3px;
  appearance: none;
}

.combo::after {
  content: "";
  position: absolute;
  right: 7px;
  top: 14px;
  border: 4px solid transparent;
  border-top-color: #666;
  border-bottom: 0;
}

/* shape gallery */
.gallery {
  display: flex;
  width: 206px;
  height: 93px;
  margin-top: 3px;
  border: 1px solid #c8c8c8;
  background: #fff;
}

.shapes {
  display: grid;
  grid-template-columns: repeat(6, 30px);
  grid-template-rows: repeat(3, 30px);
  width: 182px;
  padding-left: 1px;
}

.gallery-scroll {
  flex: 1;
  display: flex;
  flex-direction: column;
  border-left: 1px solid #c8c8c8;
}

.gallery-scroll button {
  flex: 1;
}

.gallery-scroll button + button {
  border-top: 1px solid #c8c8c8;
}

.gallery-scroll .off {
  background: #e6e6e6;
}

.collapse {
  align-self: flex-end;
  margin: 0 9px 4px auto;
}

/* workspace */
.workspace {
  flex: 1;
  display: flex;
  min-height: 0;
  padding-top: 2px;
}

.thumbs {
  display: flex;
  align-items: flex-start;
  width: 387px;
  margin-bottom: 1px;
  padding: 23px 0 0 18px;
  border-right: 1px solid #bdbdbd;
}

.thumb-number {
  width: 31px;
  font-size: 21px;
  line-height: 20px;
  color: #d24726;
}

.thumb {
  width: 308px;
  padding: 1px;
  border: 4px solid #b7472a;
  background: #f3f3f3;
}

.thumb-slide {
  display: block;
  position: relative;
  aspect-ratio: 16 / 9;
  background: #000;
  overflow: hidden;
}

.thumb-shape {
  position: absolute;
  left: 29.5%;
  top: 48%;
  width: 41%;
  height: 53%;
  background: #4472c4;
  border: 1px solid #2f528f;
}

.editor {
  flex: 1;
  display: flex;
  flex-direction: column;
  margin-bottom: 1px;
  padding: 3px 47px 0 7px;
  border-bottom: 1px solid #bdbdbd;
}

.ruler {
  display: flex;
  background: #fff;
  font-family: "Open Sans", "Noto Sans", sans-serif;
  font-size: 18px;
  color: #444;
}

.unit {
  flex: 1;
  text-align: center;
}

.horizontal {
  height: 21px;
  margin: 0 1px 0 53px;
  padding: 0 19px 0 20px;
  line-height: 20px;
  background:
    linear-gradient(#999, #999) left 8px top 8px / 1px 3px no-repeat,
    linear-gradient(#333, #333) right 18px top 6px / 1px 7px no-repeat,
    linear-gradient(#999, #999) right 7px top 8px / 1px 3px no-repeat,
    #fff;
}

.horizontal .unit {
  background:
    linear-gradient(#333, #333) left 6px / 1px 7px no-repeat,
    linear-gradient(#999, #999) 25% 8px / 1px 3px no-repeat,
    linear-gradient(#999, #999) 75% 8px / 1px 3px no-repeat;
}

.vertical {
  flex-direction: column;
  width: 21px;
  margin: 1px 30px 0 0;
  background: linear-gradient(#333, #333) 6px bottom / 7px 1px no-repeat, #fff;
}

.vertical .unit {
  writing-mode: vertical-rl;
  transform: rotate(180deg);
  line-height: 21px;
  background:
    linear-gradient(#333, #333) 8px bottom / 7px 1px no-repeat,
    linear-gradient(#999, #999) 10px 25% / 3px 1px no-repeat,
    linear-gradient(#999, #999) 10px 75% / 3px 1px no-repeat;
}

.stage {
  display: flex;
  align-items: stretch;
  margin: auto 0;
  padding-top: 6px;
}

.slide {
  position: relative;
  flex: 1;
  aspect-ratio: 16 / 9;
  background: #000;
}

/* selected rectangle, placed on the slide canvas */
.shape {
  position: absolute;
  left: 29.4%;
  top: 47.5%;
  width: 41.1%;
  height: 53.5%;
  background: #4472c4;
  border: 1px solid #979797;
  box-shadow: inset 0 0 0 1px #2f528f;
}

.handle {
  position: absolute;
  width: 17px;
  height: 17px;
  margin: -9px;
  border: 3px solid #979797;
  border-radius: 50%;
  background: #fff;
}

.nw, .n, .ne { top: 0; }
.w, .e { top: 50%; }
.sw, .s, .se { top: 100%; }
.nw, .w, .sw { left: 0; }
.n, .s { left: 50%; }
.ne, .e, .se { left: 100%; }

.stem {
  position: absolute;
  left: 50%;
  bottom: 100%;
  width: 1px;
  height: 35px;
  background: #979797;
}

.rotate {
  position: absolute;
  left: 50%;
  bottom: 100%;
  margin: 0 0 34px -17px;
}

/* format pane */
.format {
  width: 427px;
  padding: 10px 15px 0;
  border-left: 1px solid #bdbdbd;
}

.format-head {
  display: flex;
  align-items: center;
  height: 40px;
}

.format h2 {
  flex: 1;
  margin: 0 0 3px 1px;
  font-size: 35px;
  font-weight: 300;
  line-height: 40px;
  color: #b02a14;
}

.format-head button {
  width: 14px;
  height: 36px;
  margin-right: 48px;
}

.format-head button + button {
  margin-right: 9px;
}

.format-tabs {
  display: flex;
  margin: 20px 0 0 7px;
}

.format-tabs a + a {
  margin-left: 18px;
  padding-left: 8px;
  border-left: 1px solid #dcdcdc;
}

.format-tabs .selected {
  font-weight: bold;
}

.format-icons {
  display: flex;
  gap: 10px;
  margin: 16px 0 0 3px;
}

.format-icons button {
  width: 44px;
  height: 44px;
}

.format-icons .selected {
  background: #ababab;
}

.notch {
  height: 23px;
  padding: 9px 0 0 12px;
  border-bottom: 2px solid #c8c8c8;
}

.section-title {
  display: flex;
  align-items: center;
  gap: 12px;
  margin: 0 0 0 9px;
  font-size: 19px;
  color: #444;
}

.section-title.open {
  margin-top: 9px;
  color: #b83b1d;
}

.fill-options {
  margin: 15px 30px 0 33px;
  padding-bottom: 6px;
  border-bottom: 1px solid #dcdcdc;
  color: #444;
}

.fill-options label {
  display: flex;
  align-items: center;
  gap: 9px;
  height: 37px;
}

.fill-options input {
  appearance: none;
  width: 18px;
  height: 18px;
  border: 1px solid #ababab;
  border-radius: 50%;
  background: #fff;
}

.fill-options input:checked {
  background: radial-gradient(circle, #6b6b6b 5px, #fff 6px);
}

.field {
  display: flex;
  align-items: center;
  height: 39px;
  margin: 12px 30px 0 48px;
  color: #444;
}

.field + .field {
  height: 36px;
  margin-top: 9px;
  margin-bottom: 24px;
}

.color-btn {
  width: 64px;
  height: 39px;
  margin-left: auto;
  padding-left: 6px;
  gap: 9px;
  border: 1px solid #ababab;
  background: #fdfdfd;
}

.slider {
  appearance: none;
  height: 20px;
  background: linear-gradient(#ababab, #ababab) center / 100% 2px no-repeat;
}

.slider::-webkit-slider-thumb {
  appearance: none;
  width: 4px;
  height: 14px;
  background: #6b6b6b;
}

.field .slider {
  flex: 1;
  min-width: 0;
  margin: 0 9px;
}

.spin {
  display: flex;
  width: 121px;
  height: 36px;
  border: 1px solid #ababab;
  background: #fff;
}

.spin input {
  flex: 1;
  min-width: 0;
  padding-left: 8px;
}

.spin-buttons {
  display: flex;
  flex-direction: column;
  width: 26px;
}

.spin-buttons button {
  flex: 1;
}

/* status bar */
.status {
  display: flex;
  align-items: center;
  height: 34px;
  padding-left: 10px;
  background: #f3f3f3;
  border-top: 1px solid #c6c6c6;
}

.proof { margin-left: 29px; }
.lang { margin-left: 25px; }

.access {
  gap: 4px;
  margin-left: 26px;
}

.notes {
  gap: 7px;
  margin-left: auto;
}

.comments {
  gap: 5px;
  margin: 0 26px;
}

.views {
  display: flex;
  margin-right: 8px;
}

.views button {
  width: 60px;
  height: 33px;
}

.views .selected {
  background: #c5c5c5;
}

.slider.zoom {
  width: 148px;
  margin: 0 7px 0 8px;
  background:
    linear-gradient(#ababab, #ababab) center / 2px 8px no-repeat,
    linear-gradient(#ababab, #ababab) center / 100% 2px no-repeat;
}

.zoom::-webkit-slider-thumb {
  width: 8px;
  height: 17px;
}

.zoom-value {
  margin-left: 17px;
}

.fit {
  margin: 0 9px 0 29px;
}
```
